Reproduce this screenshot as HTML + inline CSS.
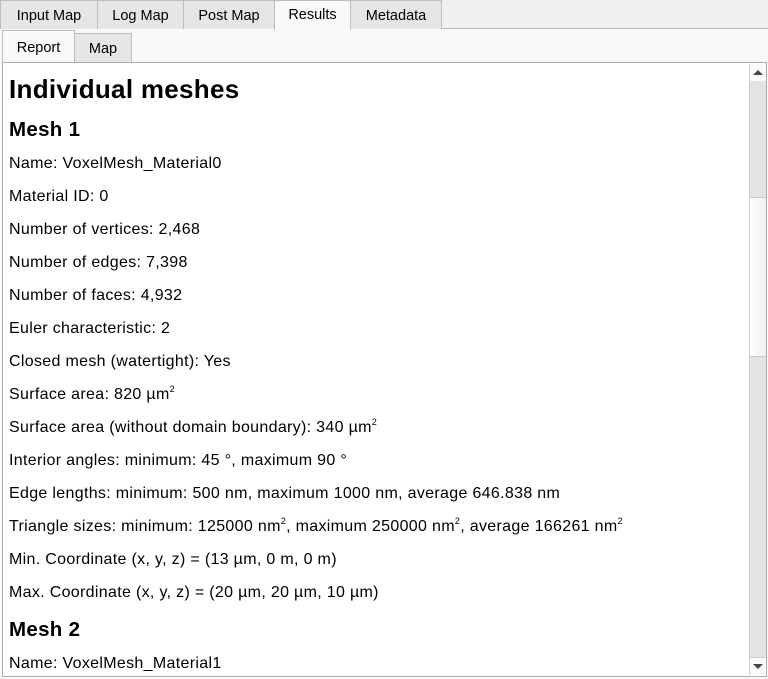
<!DOCTYPE html>
<html><head><style>
*{margin:0;padding:0;box-sizing:border-box}
body{width:768px;height:679px;background:#f0f0f0;font-family:"Liberation Sans",sans-serif;position:relative;overflow:hidden;color:#000}
.tab{position:absolute;top:0;height:29px;background:#e6e6e6;border:1px solid #bdbdbd;border-bottom:none;font-size:14.5px;text-align:center;line-height:30px}
.tab.sel{background:#f9f9f9;height:30px;line-height:29px}
.bar{position:absolute;left:0;top:28px;width:768px;height:1px;background:#bdbdbd}
.pane{position:absolute;left:0;top:29px;width:768px;height:650px;background:#f9f9f9}
.t2{position:absolute;height:30px;background:#e6e6e6;border:1px solid #bdbdbd;border-bottom:none;font-size:14.5px;text-align:center;line-height:30px}
.t2.sel{background:#f9f9f9}
.box{position:absolute;left:2px;top:62px;width:765px;height:615px;border:1px solid #adadad;background:#fff;overflow:hidden}
.content{position:absolute;left:6px;top:0;font-size:16px;white-space:nowrap;letter-spacing:0.32px}
.content div{position:absolute;left:0;line-height:20px;height:20px}
.content .h1{font-weight:bold;font-size:26px;letter-spacing:0.3px;line-height:30px;height:30px}
.content .h2{font-weight:bold;font-size:20.5px;letter-spacing:0.3px;line-height:24px;height:24px}
sup{font-size:9px;line-height:0;position:relative;top:-1px;vertical-align:super}
.sb{position:absolute;left:746px;top:1px;width:17px;height:611px;background:#e4e4e4;border-left:1px solid #cfcfcf}
</style></head><body>
<div class="pane"></div>
<div class="bar"></div>
<div class="tab" style="left:0;width:98px">Input Map</div>
<div class="tab" style="left:97px;width:87px">Log Map</div>
<div class="tab" style="left:183px;width:92px">Post Map</div>
<div class="tab sel" style="left:274px;width:77px">Results</div>
<div class="tab" style="left:350px;width:92px">Metadata</div>
<div class="t2" style="left:74px;top:33px;width:58px;height:29px">Map</div>
<div class="t2 sel" style="left:2px;top:30px;width:73px;height:33px;line-height:34px">Report</div>
<div class="box">
<div class="content">
<div class="h1" style="top:11px">Individual meshes</div>
<div class="h2" style="top:55px">Mesh 1</div>
<div style="top:91px">Name: VoxelMesh_Material0</div>
<div style="top:124px">Material ID: 0</div>
<div style="top:157px">Number of vertices: 2,468</div>
<div style="top:190px">Number of edges: 7,398</div>
<div style="top:223px">Number of faces: 4,932</div>
<div style="top:256px">Euler characteristic: 2</div>
<div style="top:289px">Closed mesh (watertight): Yes</div>
<div style="top:322px">Surface area: 820 µm<sup>2</sup></div>
<div style="top:355px">Surface area (without domain boundary): 340 µm<sup>2</sup></div>
<div style="top:388px">Interior angles: minimum: 45 °, maximum 90 °</div>
<div style="top:421px">Edge lengths: minimum: 500 nm, maximum 1000 nm, average 646.838 nm</div>
<div style="top:454px">Triangle sizes: minimum: 125000 nm<sup>2</sup>, maximum 250000 nm<sup>2</sup>, average 166261 nm<sup>2</sup></div>
<div style="top:487px">Min. Coordinate (x, y, z) = (13 µm, 0 m, 0 m)</div>
<div style="top:520px">Max. Coordinate (x, y, z) = (20 µm, 20 µm, 10 µm)</div>
<div class="h2" style="top:555px">Mesh 2</div>
<div style="top:591px">Name: VoxelMesh_Material1</div>
</div>
<div class="sb">
<div style="position:absolute;top:0;left:0;width:16px;height:17px;background:#fafafa"></div>
<div style="position:absolute;top:6px;left:3px;width:0;height:0;border-left:5px solid transparent;border-right:5px solid transparent;border-bottom:5px solid #444"></div>
<div style="position:absolute;top:133px;left:0;width:16px;height:160px;background:linear-gradient(90deg,#fff,#f0f0f0);border-top:1px solid #c8c8c8;border-bottom:1px solid #c8c8c8"></div>
<div style="position:absolute;top:593px;left:0;width:16px;height:18px;background:#fafafa;border-top:1px solid #c8c8c8"></div>
<div style="position:absolute;top:600px;left:3px;width:0;height:0;border-left:5px solid transparent;border-right:5px solid transparent;border-top:5px solid #444"></div>
</div>
</div>
</body></html>
